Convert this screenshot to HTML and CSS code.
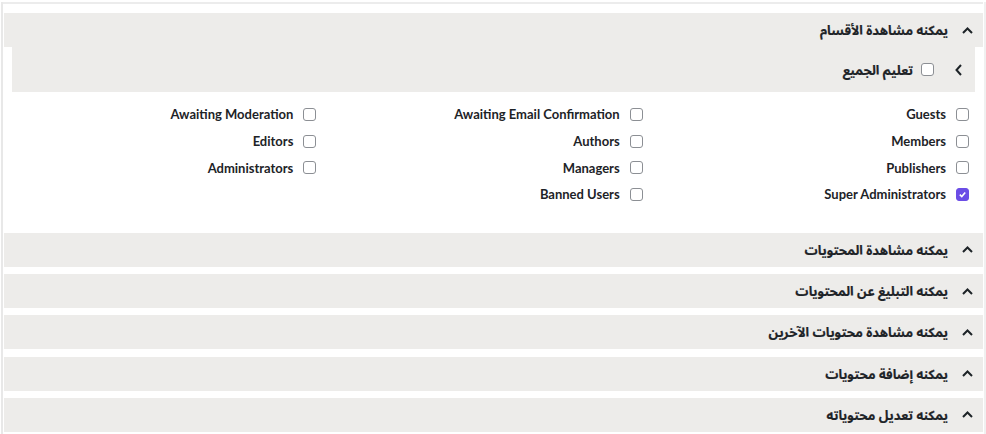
FILE: index.html
```html
<!DOCTYPE html>
<html lang="ar" dir="rtl">
<head>
<meta charset="utf-8">
<link rel="stylesheet" href="styles.css">
</head>
<body>
<div class="panel">
  <div class="topline"></div>
  <div class="section open">
    <div class="sec-head">
      <svg class="chev" viewBox="0 0 11 7" width="11" height="7"><path d="M1 6 L5.5 1.5 L10 6" fill="none" stroke="#1d2327" stroke-width="2"/></svg>
      <span class="ar">يمكنه مشاهدة الأقسام</span>
    </div>
    <div class="sub-head">
      <svg class="chev-l" viewBox="0 0 7 12" width="7" height="12"><path d="M6 1 L1.5 6 L6 11" fill="none" stroke="#1d2327" stroke-width="2"/></svg>
      <span class="cb"></span>
      <span class="ar">تعليم الجميع</span>
    </div>
    <div class="grid">
      <label class="item"><span class="cb"></span><span>Guests</span></label>
      <label class="item"><span class="cb"></span><span>Awaiting Email Confirmation</span></label>
      <label class="item"><span class="cb"></span><span>Awaiting Moderation</span></label>
      <label class="item"><span class="cb"></span><span>Members</span></label>
      <label class="item"><span class="cb"></span><span>Authors</span></label>
      <label class="item"><span class="cb"></span><span>Editors</span></label>
      <label class="item"><span class="cb"></span><span>Publishers</span></label>
      <label class="item"><span class="cb"></span><span>Managers</span></label>
      <label class="item"><span class="cb"></span><span>Administrators</span></label>
      <label class="item"><span class="cb checked"><svg viewBox="0 0 10 10" width="9" height="9"><path d="M2 5.2 L4.2 7.3 L8 2.8" fill="none" stroke="#fff" stroke-width="1.8"/></svg></span><span>Super Administrators</span></label>
      <label class="item"><span class="cb"></span><span>Banned Users</span></label>
    </div>
  </div>
  <div class="sec-head closed">
    <svg class="chev" viewBox="0 0 11 7" width="11" height="7"><path d="M1 6 L5.5 1.5 L10 6" fill="none" stroke="#1d2327" stroke-width="2"/></svg>
    <span class="ar">يمكنه مشاهدة المحتويات</span>
  </div>
  <div class="sec-head closed">
    <svg class="chev" viewBox="0 0 11 7" width="11" height="7"><path d="M1 6 L5.5 1.5 L10 6" fill="none" stroke="#1d2327" stroke-width="2"/></svg>
    <span class="ar">يمكنه التبليغ عن المحتويات</span>
  </div>
  <div class="sec-head closed">
    <svg class="chev" viewBox="0 0 11 7" width="11" height="7"><path d="M1 6 L5.5 1.5 L10 6" fill="none" stroke="#1d2327" stroke-width="2"/></svg>
    <span class="ar">يمكنه مشاهدة محتويات الآخرين</span>
  </div>
  <div class="sec-head closed">
    <svg class="chev" viewBox="0 0 11 7" width="11" height="7"><path d="M1 6 L5.5 1.5 L10 6" fill="none" stroke="#1d2327" stroke-width="2"/></svg>
    <span class="ar">يمكنه إضافة محتويات</span>
  </div>
  <div class="sec-head closed">
    <svg class="chev" viewBox="0 0 11 7" width="11" height="7"><path d="M1 6 L5.5 1.5 L10 6" fill="none" stroke="#1d2327" stroke-width="2"/></svg>
    <span class="ar">يمكنه تعديل محتوياته</span>
  </div>
</div>
</body>
</html>
```
FILE: styles.css
```css
html, body {
  margin: 0;
  padding: 0;
  background: #fff;
}
body {
  font-family: Lato, "DejaVu Sans", sans-serif;
  font-size: 13px;
  font-weight: 700;
  color: #1d2327;
  width: 986px;
  height: 434px;
  overflow: hidden;
}
.ar {
  font-family: "Noto Sans Arabic", "Noto Kufi Arabic", "DejaVu Sans", sans-serif;
  font-weight: 700;
  font-size: 13px;
  -webkit-text-stroke: 0.2px #1d2327;
}
.panel {
  margin-left: 1px;
  width: 979px;
  border-left: 2px solid #e8e8e8;
  border-right: 2px solid #f0f0f0;
  padding: 0 1px;
  min-height: 434px;
  box-sizing: content-box;
}
.topline {
  height: 2px;
  margin-top: 2px;
  margin-left: -1px;
  background: #ececec;
}
.section.open {
  margin-top: 9px;
}
.sec-head {
  background: #edecea;
  height: 34px;
  display: flex;
  align-items: center;
  gap: 14px;
  padding-right: 10px;
}
.sec-head .ar,
.sub-head .ar {
  line-height: 1;
  padding-top: 3px;
}
.sub-head {
  background: #edecea;
  height: 45px;
  margin: 0 8px 0 8px;
  display: flex;
  align-items: center;
  padding-right: 13px;
}
.sub-head .chev-l {
  margin-left: 21px;
}
.sub-head .cb {
  margin-left: 8px;
}
.grid {
  display: grid;
  grid-template-columns: repeat(3, 1fr);
  padding-top: 9px;
  padding-bottom: 25px;
}
.item {
  display: flex;
  align-items: center;
  height: 26.7px;
  padding-right: 14px;
  gap: 10px;
}
.cb {
  width: 13px;
  height: 13px;
  border: 1px solid #8c8f94;
  border-radius: 3px;
  box-sizing: border-box;
  background: #fff;
  display: inline-flex;
  align-items: center;
  justify-content: center;
  flex: none;
}
.cb.checked {
  background: #6b4de6;
  border-color: #6b4de6;
}
.sec-head.closed {
  margin-bottom: 7.25px;
}
```
